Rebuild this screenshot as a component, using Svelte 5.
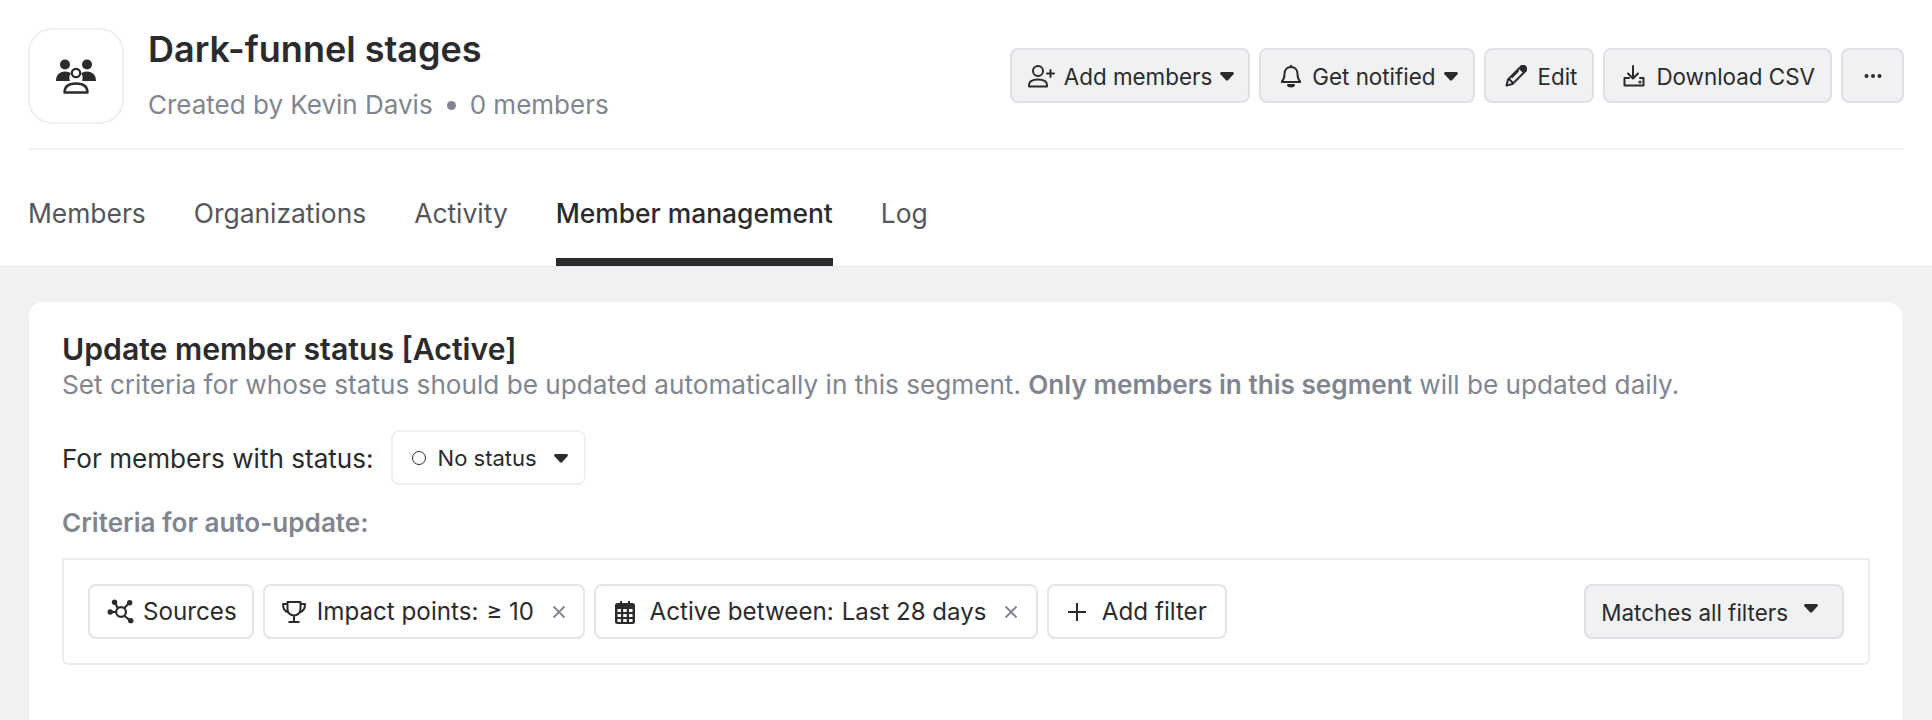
<script>
	const tabs = ['Members', 'Organizations', 'Activity', 'Member management', 'Log'];
	const activeTab = 'Member management';
</script>

{#snippet caret()}
	<svg class="caret" width="14" height="9" viewBox="0 0 14 9" fill="#2b2b2e">
		<path d="M1.500 0h11c1.200 0 1.800 1.300 1 2.200L8 8.300c-.6.600-1.400.6-2 0L.5 2.200C-.3 1.300.3 0 1.500 0z" />
	</svg>
{/snippet}

{#snippet close()}
	<svg class="close" width="14" height="14" viewBox="0 0 14 14" stroke="#81858f" stroke-width="1.800">
		<path d="M1.500 1.500l11 11M12.500 1.500l-11 11" />
	</svg>
{/snippet}

<div class="page">
	<header class="header">
		<div class="top">
			<div class="identity">
				<div class="avatar">
					<svg width="42" height="36" viewBox="0 0 42 36" fill="#2b2b2e">
						<circle cx="10" cy="6.500" r="5" />
						<circle cx="32" cy="6.500" r="5" />
						<path d="M1 23c0-6 3.500-9.500 9-9.500 2.500 0 4.500.7 6 2-1.600 1.500-2 3.800-1.200 7.500zM41 23c0-6-3.500-9.500-9-9.500-2.500 0-4.500.7-6 2 1.600 1.500 2 3.800 1.200 7.500z" />
						<circle cx="21" cy="15" r="4.200" fill="none" stroke="#2b2b2e" stroke-width="2.200" />
						<path d="M9.500 34.500c0-6 4.500-9 11.500-9s11.500 3 11.500 9z" fill="none" stroke="#2b2b2e" stroke-width="2.400" stroke-linejoin="round" />
					</svg>
				</div>
				<div class="titles">
					<h1>Dark-funnel stages</h1>
					<p class="meta">Created by Kevin Davis<span class="dot"></span>0 members</p>
				</div>
			</div>
			<div class="actions">
				<button class="btn add-members">
					<svg width="29" height="24" viewBox="1 0 27 24" fill="none" stroke="#2b2b2e" stroke-width="2" stroke-linecap="round" stroke-linejoin="round">
						<circle cx="11" cy="7" r="5" />
						<path d="M2 22.500v-1.500c0-3.500 3-5.500 9-5.500s9 2 9 5.500v1.500zM23.500 6v7M20 9.500h7" />
					</svg>
					<span>Add members</span>
					{@render caret()}
				</button>
				<button class="btn notify">
					<svg class="lead" width="20" height="26" viewBox="1 0 20 24" fill="none" stroke="#2b2b2e" stroke-width="2" stroke-linejoin="round">
						<path d="M11 3c-4 0-6.500 3-6.500 7 0 4-1 6-3 8h19c-2-2-3-4-3-8 0-4-2.500-7-6.500-7zM11 1v2" />
						<path d="M8 21h6c-.5 2-5.500 2-6 0z" fill="#2b2b2e" />
					</svg>
					<span>Get notified</span>
					{@render caret()}
				</button>
				<button class="btn edit">
					<svg class="lead" width="22" height="22" viewBox="0 0 22 22" fill="none" stroke="#2b2b2e" stroke-width="2" stroke-linejoin="round">
						<path d="M1.500 20.500l1.500-6L14.500 3l4.500 4.500L7.500 19z" />
						<path d="M15.500 2l1-1c1-.8 2-.8 3 0l1.500 1.500c.8 1 .8 2 0 3l-1 1z" fill="#2b2b2e" />
						<path d="M4 14l4 4M6.500 12.500l7-7" />
					</svg>
					<span>Edit</span>
				</button>
				<button class="btn">
					<svg class="lead" width="22" height="22" viewBox="0 0 22 22" fill="none" stroke="#2b2b2e" stroke-width="2" stroke-linecap="round" stroke-linejoin="round">
						<path d="M10 1v12M5 8.500l5 5 5-5M6 13H1.500v7.500h19V13H17" />
						<circle cx="17" cy="17" r=".6" />
					</svg>
					<span>Download CSV</span>
				</button>
				<button class="btn more" aria-label="More">
					<svg width="18" height="4" viewBox="0 0 18 4" fill="#2b2b2e">
						<circle cx="2.500" cy="2" r="2" /><circle cx="9" cy="2" r="2" /><circle cx="15.500" cy="2" r="2" />
					</svg>
				</button>
			</div>
		</div>
		<nav class="tabs">
			{#each tabs as tab}
				<span class="tab" class:active={tab === activeTab}>{tab}</span>
			{/each}
		</nav>
	</header>

	<main class="body">
		<section class="card">
			<h2>Update member status [Active]</h2>
			<p class="desc">
				Set criteria for whose status should be updated automatically in this segment.
				<strong>Only members in this segment</strong> will be updated daily.
			</p>

			<div class="status-row">
				<span class="status-label">For members with status:</span>
				<button class="select">
					<span class="ring"></span>
					<span>No status</span>
					{@render caret()}
				</button>
			</div>

			<h3>Criteria for auto-update:</h3>

			<div class="filters">
				<div class="chips">
					<div class="chip sources">
						<svg width="27" height="26" viewBox="0 0 25 24" fill="none" stroke="#2b2b2e" stroke-width="2">
							<circle cx="13" cy="12" r="4.500" />
							<path d="M4 12h4.500M10 8.500L7.500 3.500M16 8.500l4-4.500M16 15.500l5 4" />
							<g fill="#2b2b2e" stroke="none">
								<circle cx="3" cy="12" r="2.500" />
								<circle cx="7" cy="3" r="2.500" />
								<circle cx="21" cy="3.500" r="2.500" />
								<circle cx="22" cy="20" r="2.500" />
							</g>
						</svg>
						<span class="name">Sources</span>
					</div>
					<div class="chip">
						<svg class="trophy" width="24" height="24" viewBox="0 0 24 24" fill="none" stroke="#2b2b2e" stroke-width="2" stroke-linejoin="round">
							<path d="M5.500 2h13v7c0 4-3 6.500-6.500 6.500S5.500 13 5.500 9zM5.500 4H1c0 5 1.500 7.500 5.500 8.500M18.500 4H23c0 5-1.500 7.500-5.500 8.500M12 15.500V21M6.500 22h11" />
						</svg>
						<span class="name">Impact points:</span>
						<span class="value">≥ 10</span>
						{@render close()}
					</div>
					<div class="chip">
						<svg class="cal" width="20" height="24" viewBox="0 0 20 24" fill="#2b2b2e">
							<path d="M2.500 3H5V1h2v2h6V1h2v2h2.500A2.500 2.500 0 0 1 20 5.500v16a2.500 2.500 0 0 1-2.500 2.500h-15A2.500 2.500 0 0 1 0 21.500v-16A2.500 2.500 0 0 1 2.500 3z" />
							<g fill="#fff">
								<rect x="2.500" y="9" width="3.500" height="3" /><rect x="8.200" y="9" width="3.500" height="3" /><rect x="14" y="9" width="3.500" height="3" />
								<rect x="2.500" y="14" width="3.500" height="3" /><rect x="8.200" y="14" width="3.500" height="3" /><rect x="14" y="14" width="3.500" height="3" />
								<rect x="2.500" y="19" width="3.500" height="3" /><rect x="8.200" y="19" width="3.500" height="3" /><rect x="14" y="19" width="3.500" height="3" />
							</g>
						</svg>
						<span class="name">Active between:</span>
						<span class="value">Last 28 days</span>
						{@render close()}
					</div>
					<button class="chip add">
						<svg class="plus" width="18" height="18" viewBox="0 0 18 18" stroke="#2b2b2e" stroke-width="2">
							<path d="M9 0v18M0 9h18" />
						</svg>
						<span class="name">Add filter</span>
					</button>
				</div>
				<button class="btn matches">
					<span>Matches all filters</span>
					{@render caret()}
				</button>
			</div>
		</section>
	</main>
</div>

<style>
	:global(body) {
		background: #f0f1f3;
		color: #2b2b2e;
		font-family: Inter, "Liberation Sans", sans-serif;
	}

	.page {
		height: 720px;
		display: flex;
		flex-direction: column;
		overflow: hidden;
	}

	.header {
		background: #fff;
		padding: 28px 28px 0;
		border-bottom: 1px solid #e6e7ea;
		height: 267px;
		box-sizing: border-box;
		display: flex;
		flex-direction: column;
	}

	.top {
		display: flex;
		align-items: flex-start;
		justify-content: space-between;
		height: 122px;
		box-sizing: border-box;
		border-bottom: 2px solid #f0f1f2;
	}

	.identity {
		display: flex;
		gap: 24px;
	}

	.avatar {
		width: 96px;
		height: 96px;
		box-sizing: border-box;
		border: 2px solid #eeeff0;
		border-radius: 24px;
		display: flex;
		align-items: center;
		justify-content: center;
	}

	h1 {
		margin: 1px 0 0;
		font-size: 36px;
		line-height: 40px;
		font-weight: 600;
	}

	.meta {
		margin: 20px 0 0;
		font-size: 26px;
		line-height: 32px;
		color: #81858f;
		display: flex;
		align-items: center;
		gap: 14px;
	}

	.dot {
		width: 9px;
		height: 9px;
		border-radius: 50%;
		background: #81858f;
	}

	.actions {
		display: flex;
		gap: 9px;
		padding-top: 20px;
	}

	button {
		font: inherit;
		color: inherit;
	}

	.btn {
		height: 55px;
		box-sizing: border-box;
		display: inline-flex;
		align-items: center;
		gap: 8px;
		padding: 1px 15px 0 16px;
		background: #f0f1f3;
		border: 2px solid #e0e1e4;
		border-radius: 8px;
		font-size: 22.4px;
		white-space: nowrap;
	}

	.btn .lead {
		margin-left: 2px;
		margin-right: 3px;
	}

	.add-members {
		padding: 1px 14px 0 15px;
	}

	.notify {
		padding-left: 18px;
	}

	.edit {
		padding-left: 17px;
	}

	.more {
		width: 63px;
		justify-content: center;
		padding: 0;
	}

	.caret {
		flex: none;
	}

	.tabs {
		display: flex;
		gap: 48px;
		flex: 1;
	}

	.tab {
		display: flex;
		align-items: center;
		font-size: 26.4px;
		color: #55565c;
		padding-top: 18px;
		border-bottom: 8px solid transparent;
	}

	.tab.active {
		color: #2b2b2e;
		font-weight: 500;
		border-bottom-color: #2b2b2e;
	}

	.body {
		flex: 1;
		padding: 34px 29px 0 28px;
	}

	.card {
		background: #fff;
		border: 1px solid #f0f1f3;
		border-bottom: 0;
		border-radius: 16px 16px 0 0;
		height: 100%;
		box-sizing: border-box;
		padding: 29px 32px 0 33px;
	}

	h2 {
		margin: 0;
		font-size: 30.2px;
		line-height: 36px;
		font-weight: 600;
	}

	.desc {
		margin: 0;
		font-size: 26.15px;
		line-height: 36px;
		color: #81858f;
	}

	.desc strong {
		font-weight: 600;
	}

	.status-row {
		display: flex;
		align-items: center;
		gap: 17px;
		margin-top: 27px;
		font-size: 26.1px;
	}

	.status-label {
		padding-top: 2px;
	}

	.select {
		height: 55px;
		box-sizing: border-box;
		display: inline-flex;
		align-items: center;
		gap: 12px;
		padding: 1px 16px 0 19px;
		background: #fff;
		border: 2px solid #eff0f1;
		border-radius: 8px;
		font-size: 22px;
	}

	.select .caret {
		margin-left: 5px;
	}

	.ring {
		width: 14px;
		height: 14px;
		box-sizing: border-box;
		border: 1.500px solid #2b2b2e;
		border-radius: 50%;
	}

	h3 {
		margin: 22px 0 0;
		font-size: 26.1px;
		line-height: 32px;
		font-weight: 600;
		color: #81858f;
	}

	.filters {
		margin-top: 19px;
		height: 107px;
		box-sizing: border-box;
		border: 2px solid #eceded;
		border-radius: 0 0 6px 6px;
		display: flex;
		align-items: center;
		justify-content: space-between;
		padding: 0 24px;
	}

	.chips {
		display: flex;
		gap: 9px;
	}

	.chip {
		height: 55px;
		box-sizing: border-box;
		display: inline-flex;
		align-items: center;
		gap: 8px;
		padding: 0 17px;
		background: #fff;
		border: 2px solid #e4e5ea;
		border-radius: 8px;
		font-size: 24px;
		white-space: nowrap;
	}

	.name {
		font-size: 24.2px;
	}

	.chip svg {
		margin-right: 2px;
	}

	.sources {
		padding-right: 15px;
	}

	.sources svg {
		margin-right: 1px;
	}

	.chip .trophy {
		margin-right: 3px;
	}

	.chip .cal {
		margin-left: 2px;
		margin-right: 6px;
	}

	.chip .plus {
		margin-right: 8px;
		margin-left: 2px;
	}

	.chip.add {
		padding-right: 18px;
	}

	.chip .close {
		margin-left: 10px;
		margin-right: .5px;
	}

	.matches {
		padding: 1px 24px 0 15px;
		gap: 16px;
	}

	.matches .caret {
		margin-top: -7px;
	}
</style>
